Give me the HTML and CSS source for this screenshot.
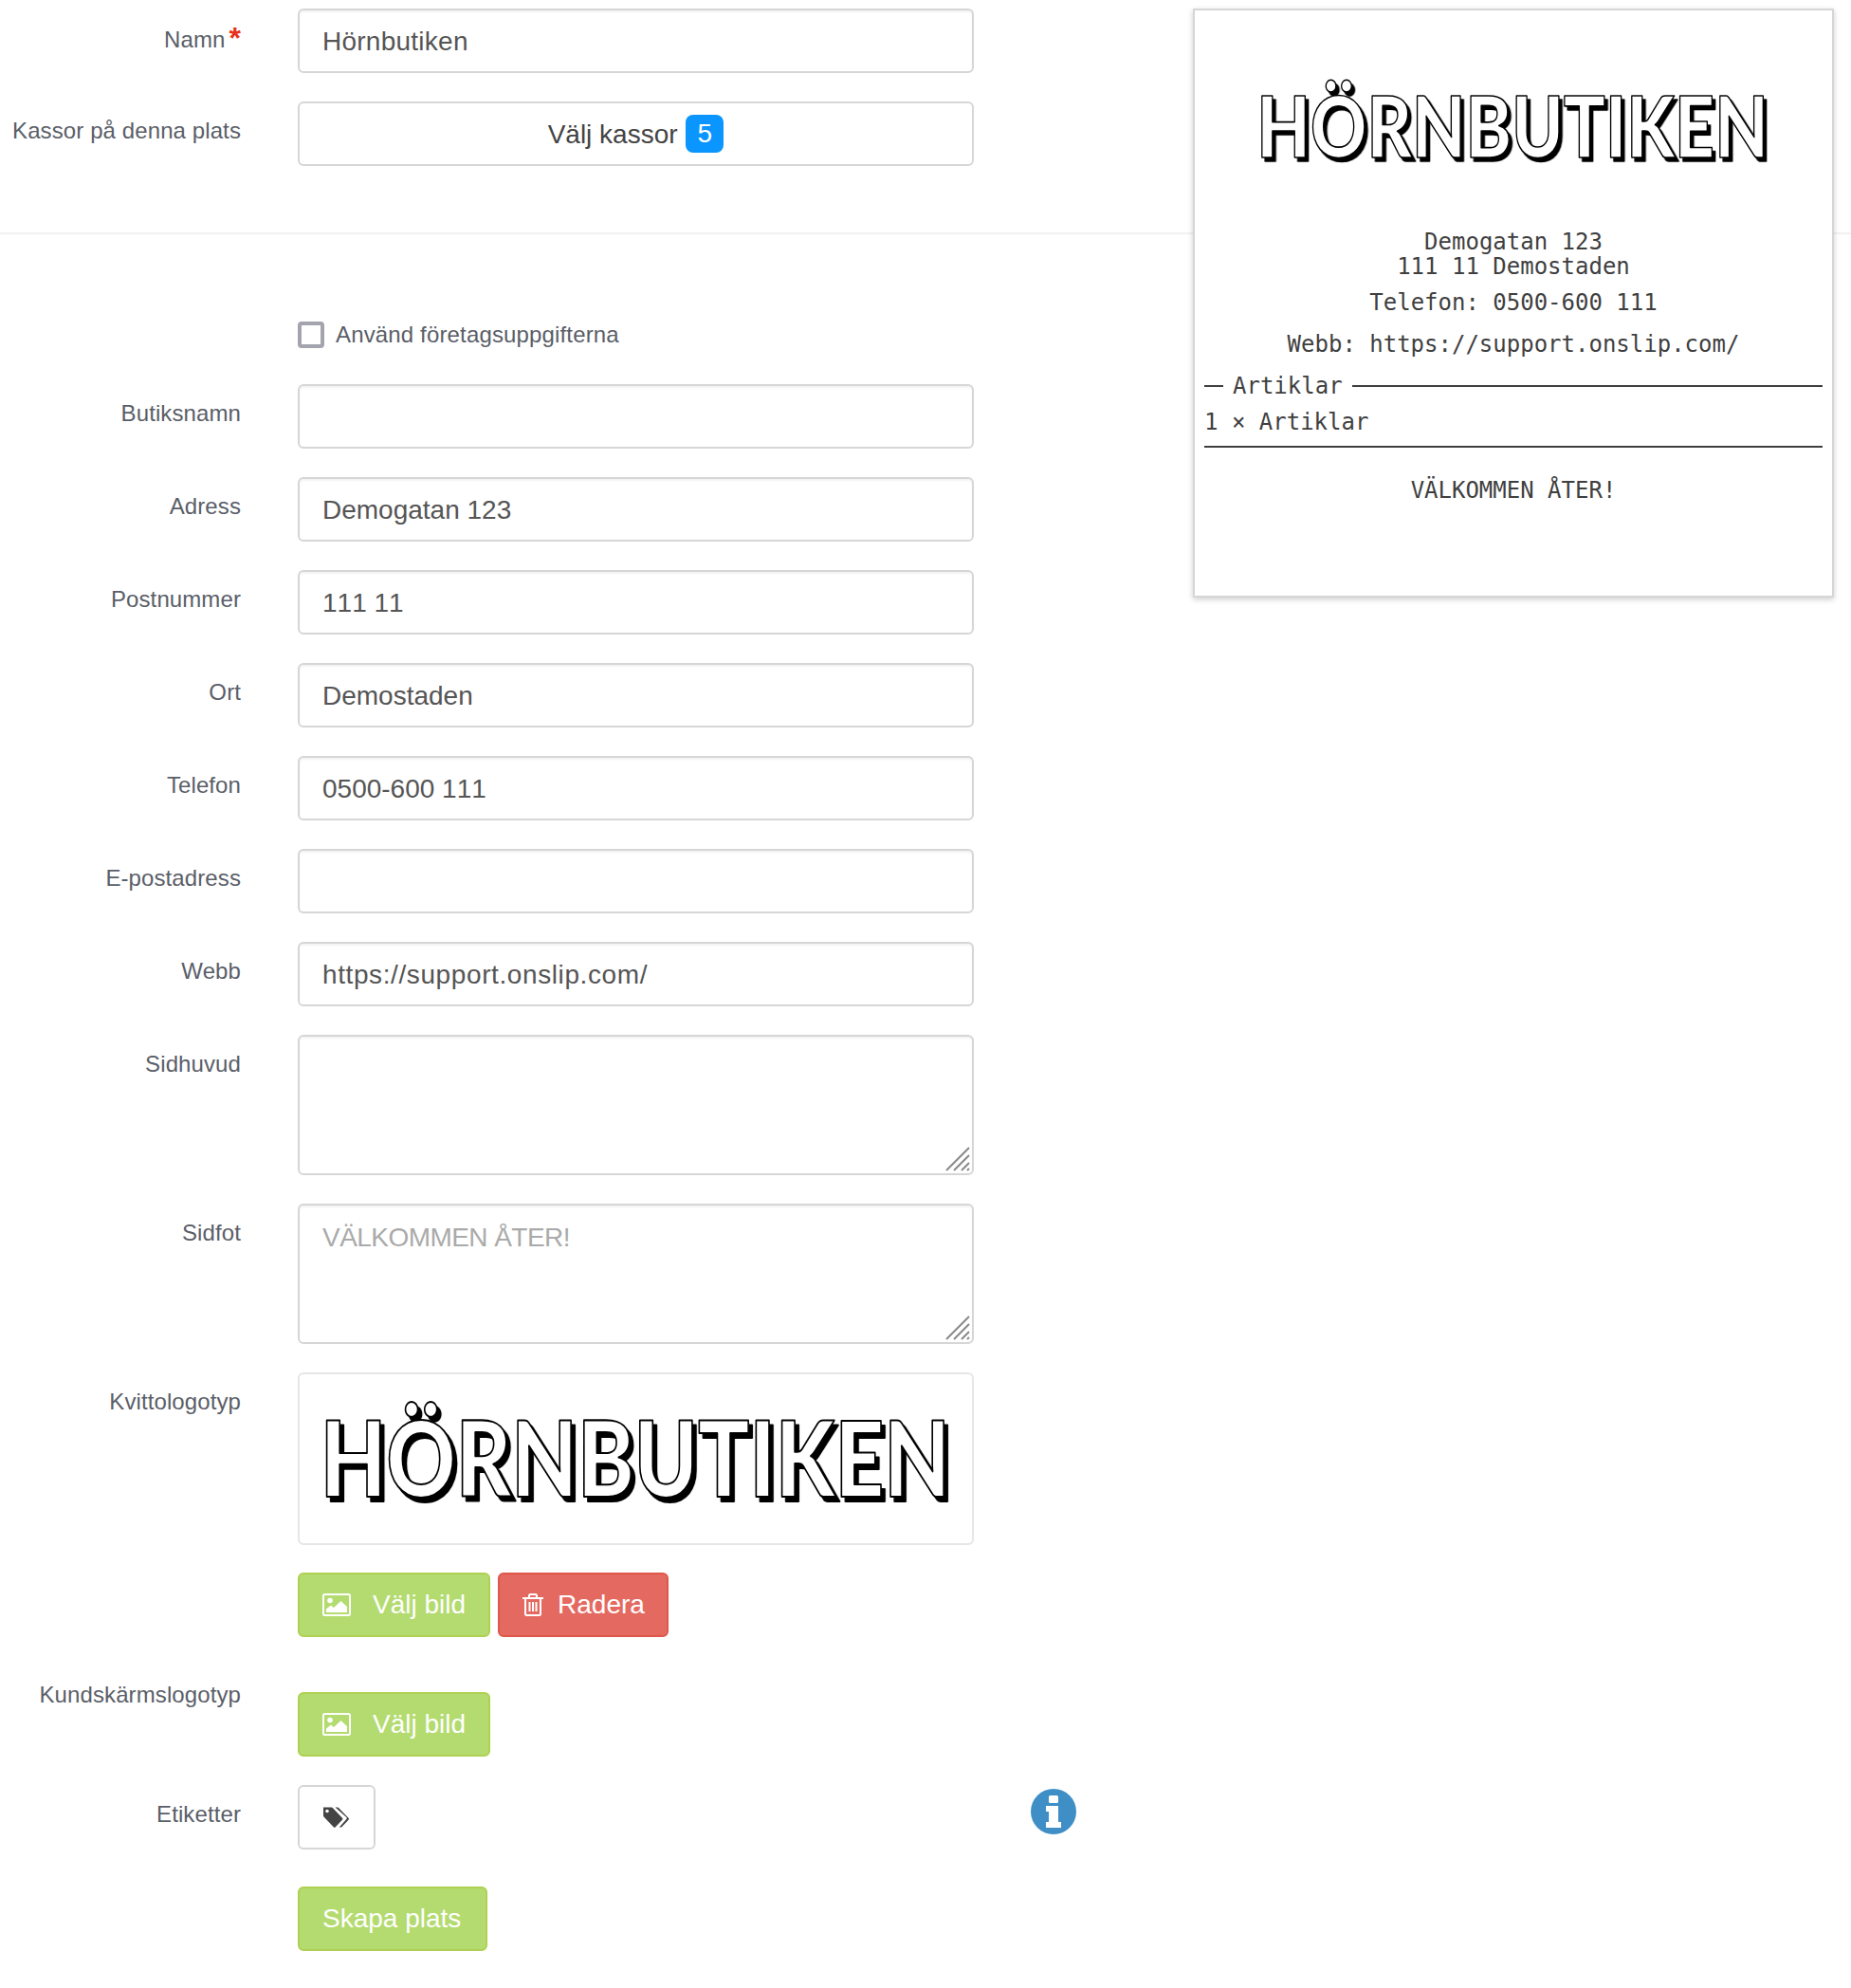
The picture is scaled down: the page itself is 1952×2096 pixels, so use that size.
FILE: index.html
```html
<!DOCTYPE html>
<html lang="sv">
  <head>
    <meta charset="UTF-8">
    <title>Skapa plats</title>
    <link rel="stylesheet" href="styles.css">
  </head>
  <body>
    <svg class="icon-defs" width="0" height="0">
      <symbol id="icon-image" viewBox="0 0 30 24">
        <rect x="1" y="1" width="28" height="22" rx="1.5" fill="none" stroke="currentColor" stroke-width="2"/>
        <circle cx="8" cy="7.5" r="2.8" fill="currentColor"/>
        <path d="M4 20v-3.5l5-4 3 2.5 7.5-7 6.5 6V20z" fill="currentColor"/>
      </symbol>
      <symbol id="icon-trash" viewBox="0 0 22 24">
        <path d="M0 5h22M7 5V2.5A1.5 1.5 0 0 1 8.500 1h5A1.500 1.500 0 0 1 15 2.500V5M3 5v16.500A1.500 1.500 0 0 0 4.500 23h13a1.500 1.500 0 0 0 1.500-1.500V5" fill="none" stroke="currentColor" stroke-width="2"/>
        <path d="M7.500 9v10M11 9v10M14.500 9v10" fill="none" stroke="currentColor" stroke-width="2"/>
      </symbol>
      <symbol id="icon-grip" viewBox="0 0 26 26">
        <path d="M1 25L25 1M9 25L25 9M17 25l8-8M23 25l2-2" fill="none" stroke="#8a8a8a" stroke-width="2"/>
      </symbol>
    </svg>

    <div class="page">
      <form class="form">
        <div class="row">
          <label class="label label-required">Namn<span class="required">*</span></label>
          <input class="input input-name" type="text" value="Hörnbutiken">
        </div>
        <div class="row">
          <label class="label">Kassor på denna plats</label>
          <button class="input select-button" type="button">Välj kassor <span class="badge">5</span></button>
        </div>

        <hr class="divider">

        <div class="row check-row">
          <span class="label"></span>
          <label class="check"><span class="check-box"></span>Använd företagsuppgifterna</label>
        </div>

        <div class="row">
          <label class="label">Butiksnamn</label>
          <input class="input" type="text">
        </div>
        <div class="row">
          <label class="label">Adress</label>
          <input class="input" type="text" value="Demogatan 123">
        </div>
        <div class="row">
          <label class="label">Postnummer</label>
          <input class="input" type="text" value="111 11">
        </div>
        <div class="row">
          <label class="label">Ort</label>
          <input class="input" type="text" value="Demostaden">
        </div>
        <div class="row">
          <label class="label">Telefon</label>
          <input class="input" type="text" value="0500-600 111">
        </div>
        <div class="row">
          <label class="label">E-postadress</label>
          <input class="input" type="text">
        </div>
        <div class="row">
          <label class="label">Webb</label>
          <input class="input input-url" type="text" value="https://support.onslip.com/">
        </div>
        <div class="row">
          <label class="label">Sidhuvud</label>
          <div class="area-wrap">
            <textarea class="input area"></textarea>
            <svg class="grip"><use href="#icon-grip"/></svg>
          </div>
        </div>
        <div class="row">
          <label class="label">Sidfot</label>
          <div class="area-wrap">
            <textarea class="input area" placeholder="VÄLKOMMEN ÅTER!"></textarea>
            <svg class="grip"><use href="#icon-grip"/></svg>
          </div>
        </div>
        <div class="row logo-row">
          <label class="label">Kvittologotyp</label>
          <div class="logo-box">
            <svg class="logo logo-large" viewBox="0 0 660 108">
              <text class="logo-text" x="-4" y="94">HÖRNBUTIKEN</text>
            </svg>
          </div>
        </div>
        <div class="row buttons-row">
          <span class="label"></span>
          <div class="buttons">
            <button class="btn btn-green" type="button"><svg class="icon-image"><use href="#icon-image"/></svg>Välj bild</button>
            <button class="btn btn-red" type="button"><svg class="icon-trash"><use href="#icon-trash"/></svg>Radera</button>
          </div>
        </div>
        <div class="row">
          <label class="label label-high">Kundskärmslogotyp</label>
          <div class="buttons">
            <button class="btn btn-green" type="button"><svg class="icon-image"><use href="#icon-image"/></svg>Välj bild</button>
          </div>
        </div>
        <div class="row tags-row">
          <label class="label">Etiketter</label>
          <div class="tags">
            <button class="tag-button" type="button">
              <svg class="icon-tags" viewBox="0 0 30 24">
                <path d="M1 1.500h8.500a2 2 0 0 1 1.500.700l10 10.500a1.500 1.500 0 0 1 0 2.100l-7.200 7.500a1.500 1.500 0 0 1-2.100 0L1.500 11.600A2 2 0 0 1 1 10.300z" fill="#444"/>
                <path d="M13.500 1.500h2.300a2 2 0 0 1 1.500.700l10.200 10.500a1.500 1.500 0 0 1 0 2.100l-7.300 7.600h-2.400l7.500-8.400a1.500 1.500 0 0 0 0-2.100z" fill="#444"/>
                <circle cx="5" cy="5.500" r="1.800" fill="#fff"/>
              </svg>
            </button>
            <svg class="icon-info" viewBox="0 0 48 48">
              <circle cx="24" cy="24" r="24" fill="#3f8fc6"/>
              <rect x="19" y="7" width="10" height="8" rx="1.500" fill="#fff"/>
              <path d="M16 18h13v17h3v6H16v-6h3V24h-3z" fill="#fff"/>
            </svg>
          </div>
        </div>
        <div class="row save-row">
          <span class="label"></span>
          <button class="btn btn-green btn-save" type="button">Skapa plats</button>
        </div>
      </form>

      <aside class="receipt">
        <div class="receipt-logo">
          <svg class="logo logo-small" viewBox="0 0 660 108">
            <text class="logo-text" x="-4" y="94">HÖRNBUTIKEN</text>
          </svg>
        </div>
        <div class="receipt-center receipt-address">Demogatan 123<br>111 11 Demostaden</div>
        <div class="receipt-center receipt-phone">Telefon: 0500-600 111</div>
        <div class="receipt-center receipt-web">Webb: https://support.onslip.com/</div>
        <div class="receipt-heading"><span>Artiklar</span></div>
        <div class="receipt-item">1 × Artiklar</div>
        <div class="receipt-center receipt-footer">VÄLKOMMEN ÅTER!</div>
      </aside>
    </div>
  </body>
</html>
```

FILE: styles.css
```css
* {
  box-sizing: border-box;
}

body {
  margin: 0;
  background: #fff;
  color: #555;
  font-family: "Liberation Sans", Arial, sans-serif;
}

.icon-defs {
  position: absolute;
}

.page {
  position: relative;
  height: 2096px;
  padding-top: 9px;
  overflow: hidden;
}

.row {
  display: flex;
  align-items: flex-start;
  margin-bottom: 30px;
}

.label {
  flex: none;
  width: 254px;
  margin-right: 60px;
  padding-top: 16px;
  color: #5a5e68;
  font-size: 24px;
  letter-spacing: 0.1px;
  line-height: 30px;
  text-align: right;
  white-space: nowrap;
}

.label-required {
  padding-top: 18px;
}

.label-high {
  padding-top: 0;
  margin-top: -12px;
}

.required {
  margin-left: 4px;
  color: #e8301c;
  font-size: 32px;
  font-weight: 700;
  line-height: 20px;
  vertical-align: -1px;
}

.input {
  display: block;
  width: 713px;
  height: 68px;
  padding: 2px 24px 0;
  background: #fff;
  border: 2px solid #d6d6d6;
  border-radius: 6px;
  box-shadow: inset 0 2px 2px rgba(0, 0, 0, 0.05);
  color: #555;
  font-family: inherit;
  font-kerning: none;
  font-size: 28px;
  outline: none;
}

.input-name {
  letter-spacing: 0.25px;
}

.input-url {
  letter-spacing: 0.6px;
}

.select-button {
  padding-top: 0;
  box-shadow: none;
  color: #444;
  text-align: center;
}

.badge {
  display: inline-block;
  width: 40px;
  height: 40px;
  margin-left: 1px;
  background: #0a95ff;
  border-radius: 8px;
  color: #fff;
  line-height: 40px;
  vertical-align: 1px;
}

.divider {
  height: 2px;
  margin: 70px 0 92px;
  background: #f1f1f1;
  border: 0;
}

.check-row {
  margin-bottom: 38px;
}

.check-row .label {
  padding-top: 0;
}

.check {
  display: flex;
  align-items: center;
  gap: 12px;
  height: 28px;
  color: #5a5e68;
  font-size: 24px;
  letter-spacing: 0.15px;
}

.check-box {
  width: 28px;
  height: 28px;
  border: 4px solid #a4a4ae;
  border-radius: 4px;
}

.area-wrap {
  position: relative;
}

.area {
  height: 148px;
  padding: 17px 24px;
  font-kerning: normal;
  line-height: 34px;
  resize: none;
}

.area::placeholder {
  color: #aaa;
  letter-spacing: -0.55px;
}

.grip {
  position: absolute;
  right: 4px;
  bottom: 4px;
  width: 26px;
  height: 26px;
}

.logo-row {
  margin-bottom: 29px;
}

.logo-box {
  display: flex;
  align-items: center;
  justify-content: center;
  width: 713px;
  height: 182px;
  border: 2px solid #e6e6e6;
  border-radius: 6px;
}

.logo {
  display: block;
  overflow: visible;
}

.logo-large {
  width: 660px;
  height: 108px;
}

.logo-small {
  width: 536px;
  height: 88px;
}

.logo-text {
  fill: #fff;
  stroke: #000;
  stroke-width: 2px;
  stroke-linejoin: round;
  font-family: Lato, sans-serif;
  font-size: 110px;
  font-weight: 900;
  transform: scaleX(0.82);
  filter: drop-shadow(5px 5px 0 #000);
}

.buttons-row {
  margin-bottom: 58px;
}

.buttons {
  display: flex;
  gap: 8px;
}

.btn {
  display: flex;
  align-items: center;
  height: 68px;
  padding: 0 24px;
  border: 2px solid;
  border-radius: 6px;
  color: #fff;
  font-family: inherit;
  font-kerning: none;
  font-size: 28px;
}

.btn-green {
  background: #b3db6f;
  border-color: #afd052;
}

.btn-red {
  background: #e46a61;
  border-color: #df564b;
  padding-right: 23px;
}

.icon-image {
  width: 30px;
  height: 24px;
  margin-right: 23px;
}

.icon-trash {
  width: 22px;
  height: 24px;
  margin-right: 15px;
}

.tags-row {
  margin-bottom: 39px;
}

.tags {
  display: flex;
  align-items: flex-start;
}

.tag-button {
  display: flex;
  align-items: center;
  justify-content: center;
  width: 82px;
  height: 68px;
  padding: 0;
  background: #fff;
  border: 2px solid #d6d6d6;
  border-radius: 6px;
}

.icon-tags {
  width: 30px;
  height: 24px;
}

.icon-info {
  width: 48px;
  height: 48px;
  margin: 4px 0 0 691px;
}

.save-row {
  margin-bottom: 0;
}

.btn-save {
  width: 200px;
}

/* kvittot ligger ovanpa avdelaren */
.receipt {
  position: absolute;
  top: 9px;
  right: 18px;
  width: 676px;
  height: 621px;
  padding: 0 10px;
  background: #fff;
  border: 2px solid #d6d6d6;
  box-shadow: 0 2px 6px rgba(0, 0, 0, 0.2);
  color: #3f3f3f;
  font-family: "DejaVu Sans Mono", monospace;
  font-size: 24px;
  line-height: 26px;
}

.receipt-logo {
  display: flex;
  justify-content: center;
  padding-top: 79px;
  height: 231px;
}

.receipt-center {
  text-align: center;
}

.receipt-phone {
  margin-top: 12px;
}

.receipt-web {
  margin-top: 18px;
}

.receipt-heading {
  display: flex;
  align-items: center;
  gap: 10px;
  margin-top: 18px;
}

.receipt-heading::before {
  content: "";
  width: 20px;
  height: 2px;
  background: #3f3f3f;
}

.receipt-heading::after {
  content: "";
  flex: 1;
  height: 2px;
  background: #3f3f3f;
}

.receipt-item {
  margin-top: 12px;
  padding-bottom: 12px;
  border-bottom: 2px solid #3f3f3f;
}

.receipt-footer {
  margin-top: 32px;
}
```
